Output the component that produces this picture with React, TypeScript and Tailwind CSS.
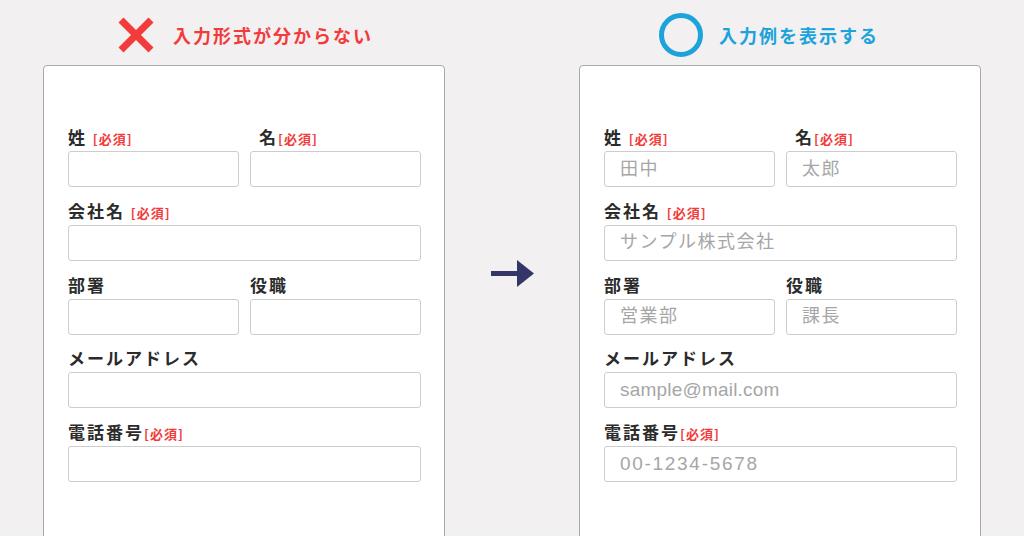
import React from "react";

const Req = () => (
  <span className="text-[13px] font-bold tracking-[1px] text-[#f23b3b]">[必須]</span>
);

function Label({ text, req, space, indent }: { text: string; req?: boolean; space?: boolean; indent?: boolean }) {
  return (
    <div
      className={
        "h-[22px] leading-[22px] mb-[3px] flex items-baseline whitespace-pre text-[17px] font-bold tracking-[2px] text-[#2b2b2b] " +
        (indent ? "pl-[9px]" : "")
      }
    >
      <span>{text + (space ? " " : "")}</span>
      {req && <Req />}
    </div>
  );
}

function Box({ ph, cls }: { ph?: string; cls?: string }) {
  return (
    <div className="h-[36px] bg-white border border-[#cdcdcd] rounded-[3px] flex items-center pl-[15px] overflow-hidden">
      {ph && (
        <span
          className={
            "text-[#a6a6a6] font-['Liberation_Sans','Noto_Sans_CJK_JP',sans-serif] whitespace-nowrap " +
            (cls ?? "text-[18px] tracking-[1.5px]")
          }
        >
          {ph}
        </span>
      )}
    </div>
  );
}

function Card({ filled }: { filled: boolean }) {
  return (
    <div className="mt-[12px] h-[520px] shrink-0 bg-white border border-[#a9a9a9] rounded-[4px] pt-[60px] pl-[24px] pr-[23px] flex flex-col gap-[12.75px]">
      <div className="grid grid-cols-2 gap-x-[11px]">
        <div>
          <Label text="姓" req space />
          <Box ph={filled ? "田中" : undefined} />
        </div>
        <div>
          <Label text="名" req indent />
          <Box ph={filled ? "太郎" : undefined} />
        </div>
      </div>
      <div>
        <Label text="会社名" req space />
        <Box ph={filled ? "サンプル株式会社" : undefined} />
      </div>
      <div className="grid grid-cols-2 gap-x-[11px]">
        <div>
          <Label text="部署" />
          <Box ph={filled ? "営業部" : undefined} />
        </div>
        <div>
          <Label text="役職" />
          <Box ph={filled ? "課長" : undefined} />
        </div>
      </div>
      <div>
        <Label text="メールアドレス" />
        <Box ph={filled ? "sample@mail.com" : undefined} cls="text-[19px] tracking-[0.2px]" />
      </div>
      <div>
        <Label text="電話番号" req />
        <Box ph={filled ? "00-1234-5678" : undefined} cls="text-[19px] tracking-[1.7px]" />
      </div>
    </div>
  );
}

export default function App() {
  return (
    <div className="w-[1024px] h-[536px] overflow-hidden bg-[#f2f0f1] flex pl-[43px] pt-[17px] font-['Noto_Sans_CJK_JP',sans-serif]">
      <div className="w-[402px] shrink-0 flex flex-col">
        <div className="h-[36px] shrink-0 flex items-center pl-[74px] gap-[18px]">
          <svg width="38" height="38" viewBox="0 0 38 38" className="shrink-0">
            <line x1="4" y1="4" x2="34" y2="34" stroke="#f23b3b" strokeWidth="7" />
            <line x1="34" y1="4" x2="4" y2="34" stroke="#f23b3b" strokeWidth="7" />
          </svg>
          <span className="text-[18px] font-bold tracking-[2px] text-[#f23b3b] whitespace-nowrap">
            入力形式が分からない
          </span>
        </div>
        <Card filled={false} />
      </div>

      <div className="w-[134px] shrink-0 flex justify-center pt-[243px]">
        <svg width="43" height="27" viewBox="0 0 43 27" className="shrink-0">
          <rect x="0" y="11" width="28" height="5" fill="#34366a" />
          <polygon points="26,0 43,13.5 26,27" fill="#34366a" />
        </svg>
      </div>

      <div className="w-[402px] shrink-0 flex flex-col">
        <div className="h-[36px] shrink-0 flex items-center pl-[80px] gap-[16px]">
          <svg width="44" height="44" viewBox="0 0 44 44" className="shrink-0">
            <circle cx="22" cy="22" r="19.5" fill="none" stroke="#1ca3db" strokeWidth="5" />
          </svg>
          <span className="text-[18px] font-bold tracking-[2px] text-[#1ca3db] whitespace-nowrap">
            入力例を表示する
          </span>
        </div>
        <Card filled />
      </div>
    </div>
  );
}
